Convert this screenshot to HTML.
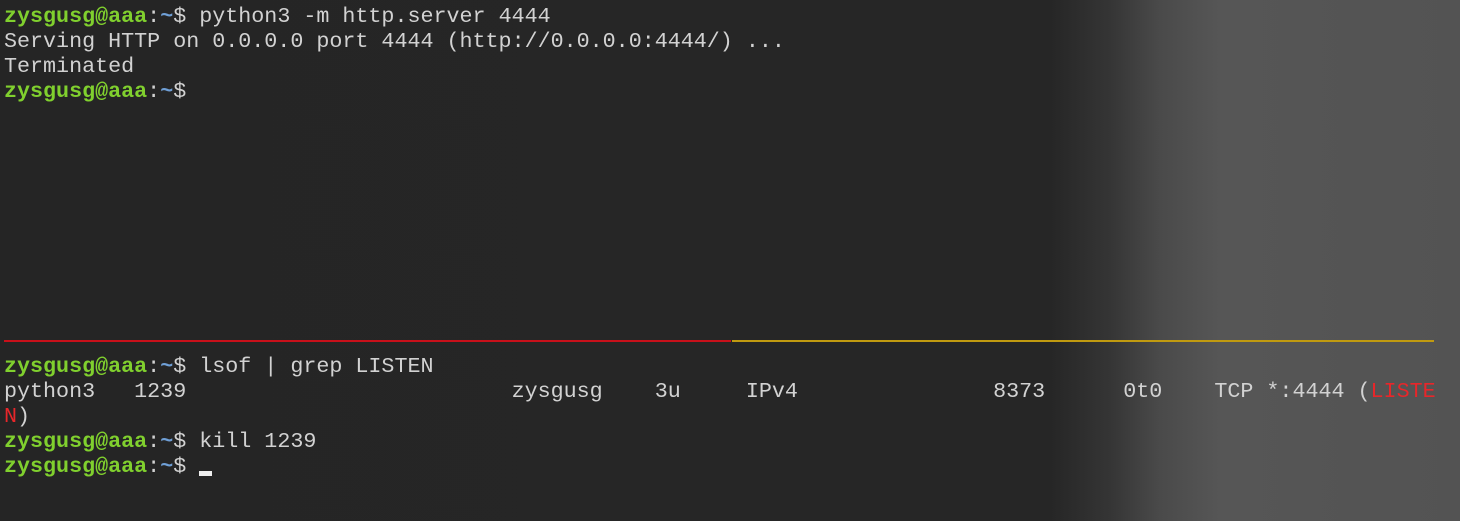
<!DOCTYPE html>
<html><head><style>
html,body{margin:0;padding:0;}
body{width:1460px;height:521px;overflow:hidden;position:relative;
background:linear-gradient(90deg,#252525 0px,#262626 1050px,#353535 1110px,#4a4a4a 1160px,#565656 1220px,#535353 1460px);
font-family:"Liberation Mono","DejaVu Sans Mono",monospace;font-size:21.7px;color:#d2d2d2;}
.r{position:absolute;left:4px;white-space:pre;line-height:25px;height:25px;}
.g{color:#80d02e;font-weight:bold;}
.b{color:#6f9fd6;font-weight:bold;}
.red{color:#e8262a;}
.cur{display:inline-block;width:13px;height:5px;background:#eee;vertical-align:-4px;}
</style></head><body>
<div class="r" style="top:4px"><span class="g">zysgusg@aaa</span>:<span class="b">~</span>$ python3 -m http.server 4444</div>
<div class="r" style="top:29px">Serving HTTP on 0.0.0.0 port 4444 (http://0.0.0.0:4444/) ...</div>
<div class="r" style="top:54px">Terminated</div>
<div class="r" style="top:79px"><span class="g">zysgusg@aaa</span>:<span class="b">~</span>$</div>
<div style="position:absolute;left:4px;top:340px;width:727px;height:2px;background:#c8101a"></div>
<div style="position:absolute;left:732px;top:340px;width:702px;height:2px;background:#c09a10"></div>
<div class="r" style="top:354px"><span class="g">zysgusg@aaa</span>:<span class="b">~</span>$ lsof | grep LISTEN</div>
<div class="r" style="top:379px">python3   1239                         zysgusg    3u     IPv4               8373      0t0    TCP *:4444 (<span class="red">LISTE</span></div>
<div class="r" style="top:404px"><span class="red">N</span>)</div>
<div class="r" style="top:429px"><span class="g">zysgusg@aaa</span>:<span class="b">~</span>$ kill 1239</div>
<div class="r" style="top:454px"><span class="g">zysgusg@aaa</span>:<span class="b">~</span>$ <span class="cur"></span></div>
</body></html>
